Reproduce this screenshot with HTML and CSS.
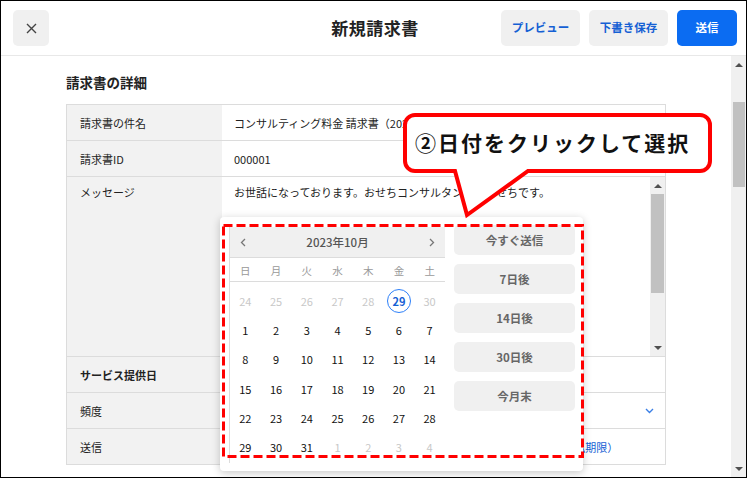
FILE: index.html
```html
<!DOCTYPE html>
<html lang="ja">
<head>
<meta charset="utf-8">
<title>新規請求書</title>
<link rel="stylesheet" href="styles.css">
</head>
<body>
<div class="frame">
  <header class="topbar">
    <div class="topbar-left">
      <button class="close" aria-label="閉じる">
        <svg width="11" height="11" viewBox="0 0 11 11"><path d="M1 1L10 10M10 1L1 10" stroke="#444" stroke-width="1.4" fill="none"/></svg>
      </button>
    </div>
    <h1 class="title">新規請求書</h1>
    <div class="actions">
      <button class="btn ghost">プレビュー</button>
      <button class="btn ghost">下書き保存</button>
      <button class="btn primary">送信</button>
    </div>
  </header>

  <div class="body">
    <main class="content">
      <h2 class="section-title">請求書の詳細</h2>
      <div class="table">
        <div class="row">
          <div class="label">請求書の件名</div>
          <div class="value">コンサルティング料金 請求書（2023年9月7日分）</div>
        </div>
        <div class="row">
          <div class="label">請求書ID</div>
          <div class="value">000001</div>
        </div>
        <div class="row row-msg">
          <div class="label">メッセージ</div>
          <div class="value msg">
            <p class="msg-text">お世話になっております。おせちコンサルタントのおせちです。</p>
            <div class="vscroll">
              <div class="sb-btn"><span class="tri-up"></span></div>
              <div class="sb-thumb msg-thumb"></div>
              <div class="sb-fill"></div>
              <div class="sb-btn"><span class="tri-down"></span></div>
            </div>
          </div>
        </div>
        <div class="row">
          <div class="label strong">サービス提供日</div>
          <div class="value"></div>
        </div>
        <div class="row">
          <div class="label">頻度</div>
          <div class="value select">
            <span>1回のみ</span>
            <svg class="chev" width="9" height="6" viewBox="0 0 9 6"><path d="M1 1L4.5 4.5L8 1" stroke="#3a7fe6" stroke-width="1.4" fill="none"/></svg>
          </div>
        </div>
        <div class="row">
          <div class="label">送信</div>
          <div class="value link">送信予定日：2023年10月29日（金）　翌月末までにお願いします（支払期限）</div>
        </div>
      </div>
    </main>
    <div class="page-scroll">
      <div class="sb-btn"><span class="tri-up"></span></div>
      <div class="sb-thumb page-thumb"></div>
      <div class="sb-fill"></div>
      <div class="sb-btn"><span class="tri-down"></span></div>
    </div>
  </div>

  <div class="popup">
    <div class="calendar">
      <div class="cal-head">
        <svg width="6" height="9" viewBox="0 0 6 9"><path d="M5 1L1.5 4.5L5 8" stroke="#777" stroke-width="1.3" fill="none"/></svg>
        <span class="cal-month">2023年10月</span>
        <svg width="6" height="9" viewBox="0 0 6 9"><path d="M1 1L4.5 4.5L1 8" stroke="#777" stroke-width="1.3" fill="none"/></svg>
      </div>
      <div class="weekdays">
        <span>日</span><span>月</span><span>火</span><span>水</span><span>木</span><span>金</span><span>土</span>
      </div>
      <div class="days">
        <span class="day muted">24</span><span class="day muted">25</span><span class="day muted">26</span><span class="day muted">27</span><span class="day muted">28</span><span class="day selected"><b>29</b></span><span class="day muted">30</span>
        <span class="day">1</span><span class="day">2</span><span class="day">3</span><span class="day">4</span><span class="day">5</span><span class="day">6</span><span class="day">7</span>
        <span class="day">8</span><span class="day">9</span><span class="day">10</span><span class="day">11</span><span class="day">12</span><span class="day">13</span><span class="day">14</span>
        <span class="day">15</span><span class="day">16</span><span class="day">17</span><span class="day">18</span><span class="day">19</span><span class="day">20</span><span class="day">21</span>
        <span class="day">22</span><span class="day">23</span><span class="day">24</span><span class="day">25</span><span class="day">26</span><span class="day">27</span><span class="day">28</span>
        <span class="day">29</span><span class="day">30</span><span class="day">31</span><span class="day muted">1</span><span class="day muted">2</span><span class="day muted">3</span><span class="day muted">4</span>
      </div>
    </div>
    <div class="quick">
      <button class="qbtn">今すぐ送信</button>
      <button class="qbtn">7日後</button>
      <button class="qbtn">14日後</button>
      <button class="qbtn">30日後</button>
      <button class="qbtn">今月末</button>
    </div>
  </div>

  <svg class="annot" width="747" height="478" viewBox="0 0 747 478">
    <rect x="223.5" y="225.5" width="359" height="231" fill="none" stroke="#ff0000" stroke-width="3" stroke-dasharray="9 4"/>
    <path d="M415 115 H700 A10 10 0 0 1 710 125 V161 A10 10 0 0 1 700 171 H528 L467 215 L455 171 H415 A10 10 0 0 1 405 161 V125 A10 10 0 0 1 415 115 Z" fill="#fff" stroke="#ff0000" stroke-width="4" stroke-linejoin="miter"/>
  </svg>
  <div class="callout-text">②日付をクリックして選択</div>
</div>
</body>
</html>
```

FILE: styles.css
```css
html, body {
  margin: 0;
  padding: 0;
  background: #fff;
}

body {
  font-family: "Noto Sans CJK JP", "Noto Sans", "Liberation Sans", sans-serif;
  color: #222;
}

.frame {
  width: 747px;
  height: 478px;
  box-sizing: border-box;
  border: 1px solid #000;
  position: relative;
  overflow: hidden;
  display: flex;
  flex-direction: column;
  background: #fff;
}

/* header */
.topbar {
  height: 54px;
  flex: none;
  border-bottom: 1px solid #e8e8e8;
  display: grid;
  grid-template-columns: 1fr auto 1fr;
  align-items: center;
  padding: 0 9px 0 12px;
}

.close {
  width: 36px;
  height: 36px;
  border: 0;
  border-radius: 5px;
  background: #f0f0f0;
  padding: 0;
  display: flex;
  align-items: center;
  justify-content: center;
}

.title {
  margin: 0;
  font-size: 17px;
  font-weight: bold;
  line-height: 24px;
  color: #222;
  letter-spacing: 0.5px;
}

.actions {
  justify-self: end;
  display: flex;
  gap: 9px;
}

.btn {
  height: 36px;
  width: 79px;
  border: 0;
  border-radius: 5px;
  padding: 0;
  font-family: inherit;
  font-size: 11.5px;
  font-weight: bold;
  line-height: 1;
}

.ghost {
  background: #f0f0f0;
  color: #1560d4;
}

.primary {
  width: 60px;
  background: #0b6cf2;
  color: #fff;
}

/* body */
.body {
  flex: 1;
  min-height: 0;
  display: flex;
}

.content {
  flex: 1;
  min-width: 0;
  padding: 17px 0 0 65px;
  overflow: hidden;
}

.section-title {
  margin: 0 0 12px;
  font-size: 13.5px;
  font-weight: bold;
  line-height: 19px;
  color: #222;
}

.table {
  width: 600px;
  box-sizing: border-box;
  border: 1px solid #dcdcdc;
  border-bottom: 0;
}

.row {
  display: flex;
  height: 35px;
  border-bottom: 1px solid #dcdcdc;
}

.label {
  width: 155px;
  flex: none;
  box-sizing: border-box;
  background: #f2f2f2;
  padding-left: 13px;
  display: flex;
  align-items: center;
  font-size: 11px;
  line-height: 18px;
  color: #222;
}

.label.strong {
  font-weight: bold;
}

.value {
  flex: 1;
  min-width: 0;
  padding-left: 12px;
  display: flex;
  align-items: center;
  font-size: 11px;
  line-height: 18px;
  color: #222;
  white-space: nowrap;
  overflow: hidden;
}

.row-msg {
  height: 179px;
}

.row-msg .label {
  align-items: flex-start;
  padding-top: 6px;
}

.msg {
  align-items: stretch;
  padding-right: 0;
}

.msg-text {
  flex: 1;
  margin: 0;
  padding-top: 6px;
}

.select {
  justify-content: space-between;
  padding-right: 11px;
}

.select span {
  visibility: hidden;
}

.link {
  color: #1560d4;
}

/* fake scrollbars */
.vscroll,
.page-scroll {
  width: 15px;
  flex: none;
  background: #f0f0f0;
  display: flex;
  flex-direction: column;
}

.sb-btn {
  height: 17px;
  flex: none;
  display: flex;
  align-items: center;
  justify-content: center;
}

.sb-fill {
  flex: 1;
}

.sb-thumb {
  background: #c1c1c1;
  margin: 0 1px 0 2px;
  flex: none;
}

.msg-thumb {
  height: 99px;
  margin: 0 1px;
}

.page-thumb {
  height: 85px;
  margin-top: 29px;
}

.tri-up,
.tri-down {
  width: 0;
  height: 0;
  border-left: 4px solid transparent;
  border-right: 4px solid transparent;
}

.tri-up {
  border-bottom: 4px solid #505050;
}

.tri-down {
  border-top: 4px solid #505050;
}

/* date popup */
.popup {
  position: absolute;
  left: 219px;
  top: 216px;
  width: 363px;
  height: 254px;
  box-sizing: border-box;
  background: #fff;
  border-radius: 4px;
  box-shadow: 0 2px 8px rgba(0, 0, 0, 0.22);
  padding: 8px 0 0 9px;
  display: flex;
  gap: 9px;
  align-items: flex-start;
}

.calendar {
  width: 216px;
  height: 236px;
  margin-top: 2px;
  box-sizing: border-box;
  border-left: 1px solid #dcdcdc;
}

.cal-head {
  height: 30px;
  background: #f0f0f0;
  display: flex;
  align-items: center;
  justify-content: space-between;
  padding: 0 10px 0 10px;
}

.cal-month {
  font-size: 11.5px;
  color: #555;
  font-weight: 500;
}

.weekdays {
  height: 25px;
  box-sizing: border-box;
  padding-top: 2px;
  border-top: 1px solid #dcdcdc;
  border-bottom: 1px solid #dcdcdc;
  display: grid;
  grid-template-columns: repeat(7, 1fr);
  align-items: center;
  text-align: center;
  font-size: 10.5px;
  color: #999;
}

.days {
  display: grid;
  grid-template-columns: repeat(7, 1fr);
  grid-auto-rows: 29.3px;
  padding-top: 4px;
}

.day {
  display: flex;
  align-items: center;
  justify-content: center;
  font-size: 11px;
  color: #111;
}

.day.muted {
  color: #c8c8c8;
}

.day.selected b {
  width: 24px;
  height: 24px;
  box-sizing: border-box;
  border: 1.5px solid #2d7ff9;
  border-radius: 50%;
  display: flex;
  align-items: center;
  justify-content: center;
  color: #1560d4;
  font-weight: bold;
}

.quick {
  width: 121px;
  display: flex;
  flex-direction: column;
  gap: 9px;
}

.qbtn {
  height: 30px;
  border: 0;
  border-radius: 5px;
  background: #f0f0f0;
  color: #666;
  font-family: inherit;
  font-size: 11.5px;
  font-weight: bold;
  padding: 0;
}

/* annotation overlay */
.annot {
  position: absolute;
  left: -1px;
  top: -1px;
  pointer-events: none;
}

.callout-text {
  position: absolute;
  left: 414px;
  top: 126px;
  line-height: 30px;
  font-size: 21px;
  font-weight: bold;
  letter-spacing: 2px;
  color: #111;
  white-space: nowrap;
}
```
